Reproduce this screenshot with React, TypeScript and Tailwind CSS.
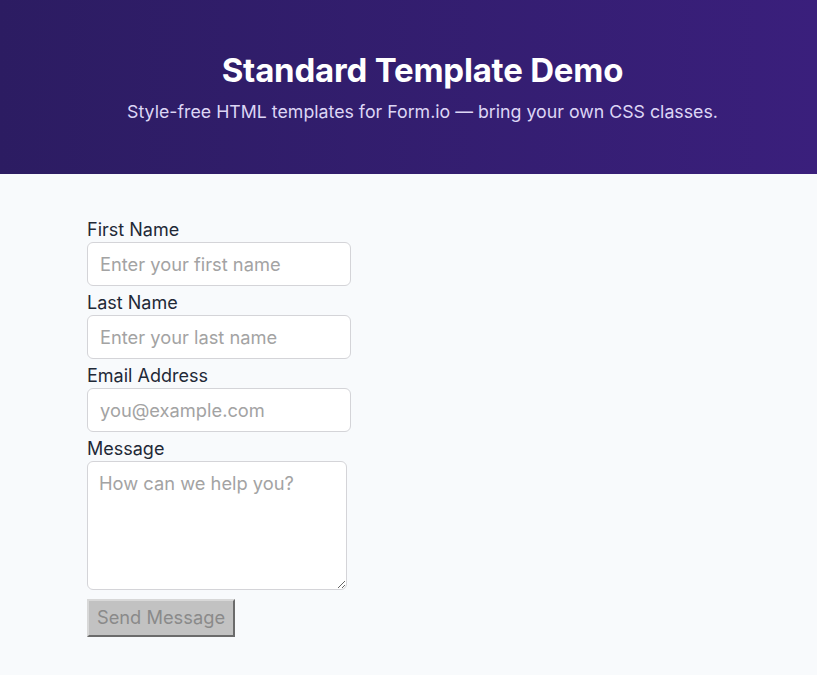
import React from "react";

export default function App() {
  const font = { fontFamily: "Inter, 'Noto Sans', sans-serif" };
  const inputCls =
    "w-[264px] h-[44px] rounded-[6px] border border-[#d4d4d8] bg-white px-[12px] text-[18.3px] text-[#1f2937] placeholder:text-[#a3a3a3] outline-none";
  const labelCls = "text-[18px] leading-[25px] text-[#1f2937]";
  return (
    <div className="min-h-[675px] bg-[#f8fafc]" style={font}>
      <header className="h-[174px] bg-gradient-to-r from-[#2c1c62] to-[#3a1f7c] flex flex-col items-center pt-[50px] pl-[28px]">
        <h1 className="text-[33px] leading-[40px] font-bold text-white tracking-[-0.2px]">Standard Template Demo</h1>
        <p className="mt-[10px] text-[17.75px] leading-[24px] text-[#ddd6f5]">
          Style-free HTML templates for Form.io — bring your own CSS classes.
        </p>
      </header>
      <main className="pl-[87px] pt-[43px]">
        <form className="flex flex-col" onSubmit={(e) => e.preventDefault()}>
          <label className={labelCls}>First Name</label>
          <input className={inputCls} placeholder="Enter your first name" />
          <label className={"mt-[4px] " + labelCls}>Last Name</label>
          <input className={inputCls} placeholder="Enter your last name" />
          <label className={"mt-[4px] " + labelCls}>Email Address</label>
          <input className={inputCls} placeholder="you@example.com" />
          <label className={"mt-[4px] " + labelCls}>Message</label>
          <textarea
            className="w-[260px] h-[129px] rounded-[6px] border border-[#d4d4d8] bg-white px-[11px] py-[9px] text-[18.3px] leading-[24px] text-[#1f2937] placeholder:text-[#a3a3a3] outline-none"
            placeholder="How can we help you?"
          />
          <div className="mt-[9px]">
            <button
              type="submit"
              className="w-[148px] h-[38px] bg-[#c2c2c2] text-[#8a8a8a] text-[18.3px] border-2 border-t-[#d8d8d8] border-l-[#d8d8d8] border-r-[#6b6b6b] border-b-[#6b6b6b]"
            >
              Send Message
            </button>
          </div>
        </form>
      </main>
    </div>
  );
}
